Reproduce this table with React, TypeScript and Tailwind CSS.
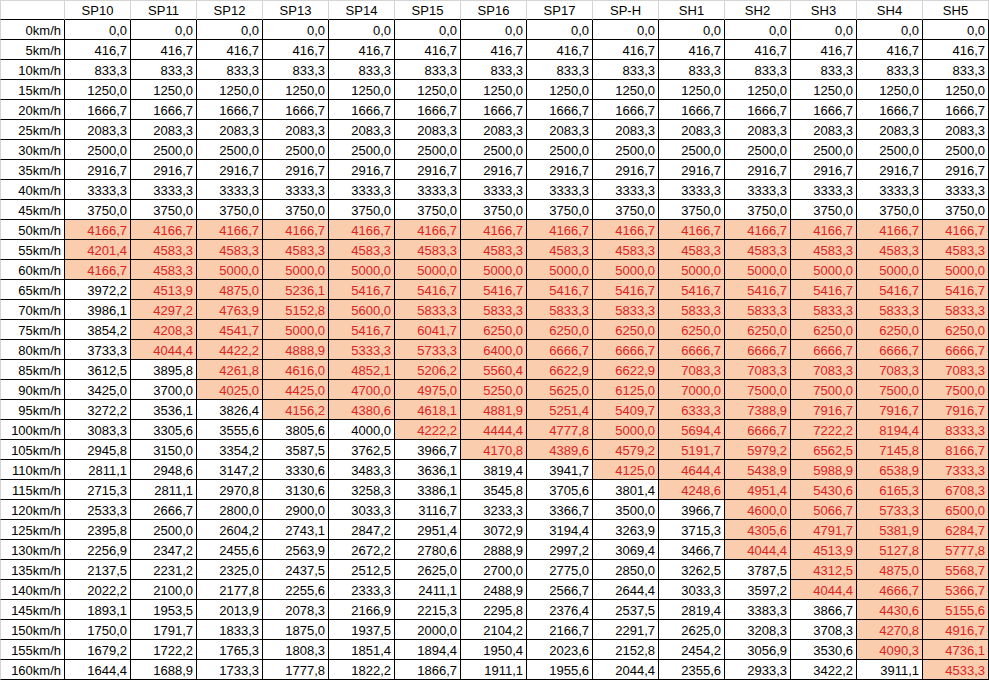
const headers = ['SP10', 'SP11', 'SP12', 'SP13', 'SP14', 'SP15', 'SP16', 'SP17', 'SP-H', 'SH1', 'SH2', 'SH3', 'SH4', 'SH5']

const same = (v: string, n: number) => Array(n).fill(v) as string[]

const rows: [string, string[]][] = [
  ['0km/h', same('0,0', 14)],
  ['5km/h', same('416,7', 14)],
  ['10km/h', same('833,3', 14)],
  ['15km/h', same('1250,0', 14)],
  ['20km/h', same('1666,7', 14)],
  ['25km/h', same('2083,3', 14)],
  ['30km/h', same('2500,0', 14)],
  ['35km/h', same('2916,7', 14)],
  ['40km/h', same('3333,3', 14)],
  ['45km/h', same('3750,0', 14)],
  ['50km/h', same('4166,7', 14)],
  ['55km/h', ['4201,4', ...same('4583,3', 13)]],
  ['60km/h', ['4166,7', '4583,3', ...same('5000,0', 12)]],
  ['65km/h', ['3972,2', '4513,9', '4875,0', '5236,1', ...same('5416,7', 10)]],
  ['70km/h', ['3986,1', '4297,2', '4763,9', '5152,8', '5600,0', ...same('5833,3', 9)]],
  ['75km/h', ['3854,2', '4208,3', '4541,7', '5000,0', '5416,7', '6041,7', ...same('6250,0', 8)]],
  ['80km/h', ['3733,3', '4044,4', '4422,2', '4888,9', '5333,3', '5733,3', '6400,0', ...same('6666,7', 7)]],
  ['85km/h', ['3612,5', '3895,8', '4261,8', '4616,0', '4852,1', '5206,2', '5560,4', '6622,9', '6622,9', ...same('7083,3', 5)]],
  ['90km/h', ['3425,0', '3700,0', '4025,0', '4425,0', '4700,0', '4975,0', '5250,0', '5625,0', '6125,0', '7000,0', ...same('7500,0', 4)]],
  ['95km/h', ['3272,2', '3536,1', '3826,4', '4156,2', '4380,6', '4618,1', '4881,9', '5251,4', '5409,7', '6333,3', '7388,9', '7916,7', '7916,7', '7916,7']],
  ['100km/h', ['3083,3', '3305,6', '3555,6', '3805,6', '4000,0', '4222,2', '4444,4', '4777,8', '5000,0', '5694,4', '6666,7', '7222,2', '8194,4', '8333,3']],
  ['105km/h', ['2945,8', '3150,0', '3354,2', '3587,5', '3762,5', '3966,7', '4170,8', '4389,6', '4579,2', '5191,7', '5979,2', '6562,5', '7145,8', '8166,7']],
  ['110km/h', ['2811,1', '2948,6', '3147,2', '3330,6', '3483,3', '3636,1', '3819,4', '3941,7', '4125,0', '4644,4', '5438,9', '5988,9', '6538,9', '7333,3']],
  ['115km/h', ['2715,3', '2811,1', '2970,8', '3130,6', '3258,3', '3386,1', '3545,8', '3705,6', '3801,4', '4248,6', '4951,4', '5430,6', '6165,3', '6708,3']],
  ['120km/h', ['2533,3', '2666,7', '2800,0', '2900,0', '3033,3', '3116,7', '3233,3', '3366,7', '3500,0', '3966,7', '4600,0', '5066,7', '5733,3', '6500,0']],
  ['125km/h', ['2395,8', '2500,0', '2604,2', '2743,1', '2847,2', '2951,4', '3072,9', '3194,4', '3263,9', '3715,3', '4305,6', '4791,7', '5381,9', '6284,7']],
  ['130km/h', ['2256,9', '2347,2', '2455,6', '2563,9', '2672,2', '2780,6', '2888,9', '2997,2', '3069,4', '3466,7', '4044,4', '4513,9', '5127,8', '5777,8']],
  ['135km/h', ['2137,5', '2231,2', '2325,0', '2437,5', '2512,5', '2625,0', '2700,0', '2775,0', '2850,0', '3262,5', '3787,5', '4312,5', '4875,0', '5568,7']],
  ['140km/h', ['2022,2', '2100,0', '2177,8', '2255,6', '2333,3', '2411,1', '2488,9', '2566,7', '2644,4', '3033,3', '3597,2', '4044,4', '4666,7', '5366,7']],
  ['145km/h', ['1893,1', '1953,5', '2013,9', '2078,3', '2166,9', '2215,3', '2295,8', '2376,4', '2537,5', '2819,4', '3383,3', '3866,7', '4430,6', '5155,6']],
  ['150km/h', ['1750,0', '1791,7', '1833,3', '1875,0', '1937,5', '2000,0', '2104,2', '2166,7', '2291,7', '2625,0', '3208,3', '3708,3', '4270,8', '4916,7']],
  ['155km/h', ['1679,2', '1722,2', '1765,3', '1808,3', '1851,4', '1894,4', '1950,4', '2023,6', '2152,8', '2454,2', '3056,9', '3530,6', '4090,3', '4736,1']],
  ['160km/h', ['1644,4', '1688,9', '1733,3', '1777,8', '1822,2', '1866,7', '1911,1', '1955,6', '2044,4', '2355,6', '2933,3', '3422,2', '3911,1', '4533,3']],
]

// cells above 4000 are highlighted
const isHot = (v: string) => parseFloat(v.replace(',', '.')) > 4000

export default function App() {
  return (
    <div className="w-[989px] h-[681px] overflow-hidden bg-white font-['Liberation_Sans',Arial,sans-serif] text-[13px] text-black">
      <div className="grid grid-cols-[65px_repeat(14,66px)]">
        {/* header row */}
        <div className="h-[20px] border-t border-l border-r border-t-[#d4d4d4] border-l-[#d4d4d4] border-r-[#d4d4d4] border-b border-b-black" />
        {headers.map((h) => (
          <div
            key={h}
            className="h-[20px] flex items-center justify-center pt-[1px] border-t border-r border-b border-t-[#d4d4d4] border-r-[#d4d4d4] border-b-black"
          >
            {h}
          </div>
        ))}

        {rows.map(([label, values]) => (
          <div key={label} className="contents">
            <div className="h-[20px] flex items-center justify-end pr-[3px] pt-[2px] border-l border-l-[#d4d4d4] border-r border-b border-r-black border-b-black">
              {label}
            </div>
            {values.map((v, i) => {
              const hot = isHot(v)
              return (
                <div
                  key={i}
                  className={
                    'h-[20px] flex items-center justify-end pr-[3px] pt-[2px] border-r border-b border-black ' +
                    (hot ? 'bg-[#f9cdae] text-[#e02222]' : 'bg-white')
                  }
                >
                  {v}
                </div>
              )
            })}
          </div>
        ))}
      </div>
    </div>
  )
}
